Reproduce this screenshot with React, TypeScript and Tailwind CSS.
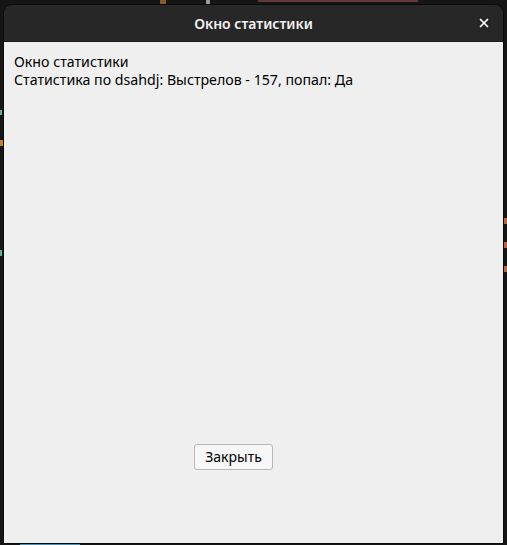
import { X } from 'lucide-react';

function CodeBackdrop() {
  return (
    <div className="absolute inset-0 overflow-hidden">
      <div className="absolute left-[160px] top-0 h-[6px] w-[6px] bg-[#8a5a2b]" />
      <div className="absolute left-[206px] top-0 h-[4px] w-[4px] bg-[#9a9a9a]" />
      <div className="absolute left-[258px] top-0 h-[2px] w-[160px] bg-[#e06c75] opacity-40" />
      <div className="absolute left-0 top-[110px] h-[5px] w-[2px] bg-[#4fb3a0]" />
      <div className="absolute left-0 top-[140px] h-[6px] w-[3px] bg-[#c2812a]" />
      <div className="absolute left-0 top-[250px] h-[6px] w-[2px] bg-[#4fb3a0]" />
      <div className="absolute right-0 top-[218px] h-[6px] w-[3px] bg-[#c0623a]" />
      <div className="absolute right-0 top-[242px] h-[6px] w-[3px] bg-[#c0623a]" />
      <div className="absolute right-0 top-[266px] h-[6px] w-[3px] bg-[#b56a3a]" />
      <div className="absolute left-[20px] bottom-0 h-[2px] w-[60px] bg-[#4f8fb0]" />
    </div>
  );
}

export default function App() {
  return (
    <div className="relative w-[507px] h-[545px] bg-[#151515] overflow-hidden flex flex-col pt-[5px] px-[4px] pb-[2px]">
      <CodeBackdrop />

      <div className="relative flex-1 flex flex-col rounded-t-[8px] overflow-hidden shadow-[0_0_0_1px_#0b0b0b]">
        <header className="h-[37px] shrink-0 grid grid-cols-[1fr_auto_1fr] items-center bg-[#272727] border-b border-[#1a1a1a]">
          <div />
          <span className="text-[#f2f2f2] text-[14px] font-semibold font-['Noto_Sans',sans-serif]">
            Окно статистики
          </span>
          <div className="flex justify-end pr-[12px]">
            <button className="text-white">
              <X size={14} strokeWidth={3} />
            </button>
          </div>
        </header>

        <main className="flex-1 flex flex-col bg-[#efefef] pl-[10px] pt-[11px] pb-[73px] font-['Noto_Sans',sans-serif] text-[14.2px] leading-[18px] text-black">
          <p>Окно статистики</p>
          <p>Статистика по dsahdj: Выстрелов - 157, попал: Да</p>

          <div className="flex-1" />

          <button className="ml-[180px] w-[79px] h-[26px] self-start rounded-[3px] border border-[#b8b8b8] bg-[#f7f7f7] text-[14px] text-black">
            Закрыть
          </button>
        </main>
      </div>
    </div>
  );
}
